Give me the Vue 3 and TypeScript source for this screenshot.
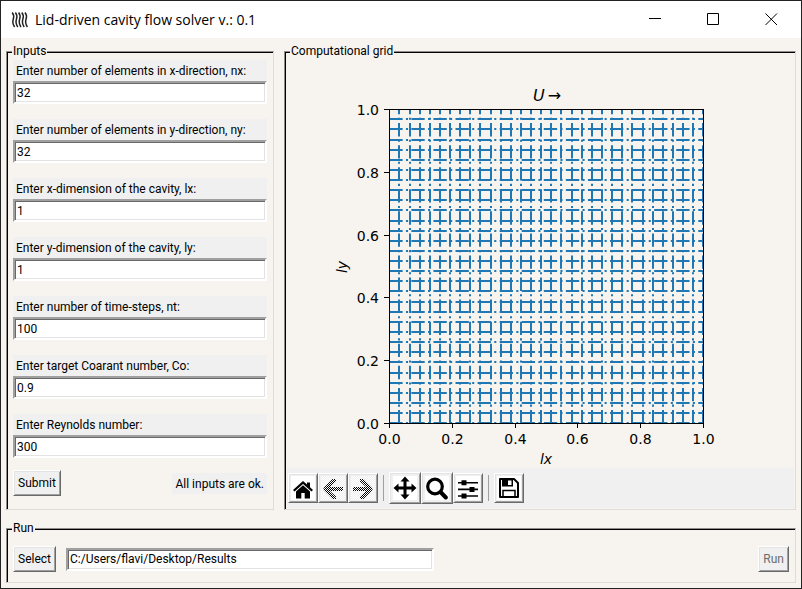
<script setup lang="ts">
import { reactive, ref } from 'vue'

interface Field {
  id: string
  label: string
  value: string
}

const fields = reactive<Field[]>([
  { id: 'nx', label: 'Enter number of elements in x-direction, nx:', value: '32' },
  { id: 'ny', label: 'Enter number of elements in y-direction, ny:', value: '32' },
  { id: 'lx', label: 'Enter x-dimension of the cavity, lx:', value: '1' },
  { id: 'ly', label: 'Enter y-dimension of the cavity, ly:', value: '1' },
  { id: 'nt', label: 'Enter number of time-steps, nt:', value: '100' },
  { id: 'co', label: 'Enter target Coarant number, Co:', value: '0.9' },
  { id: 're', label: 'Enter Reynolds number:', value: '300' },
])
const resultsPath = ref('C:/Users/flavi/Desktop/Results')

// Axes box inside the figure's viewBox
const left = 102
const right = 416
const top = 51
const bottom = 365
const size = right - left
const nodes = 32

const gridX = Array.from({ length: nodes }, (_, i) => Math.round(left + 0.3 + (size * i) / (nodes - 1)))
const gridY = Array.from({ length: nodes }, (_, i) => Math.round(bottom + 0.15 - (size * i) / (nodes - 1)))

const ticks = [0, 0.2, 0.4, 0.6, 0.8, 1].map((t) => ({
  text: t.toFixed(1),
  x: Math.round(left + size * t) + 0.5,
  y: Math.round(bottom - size * t) + 0.5,
}))
</script>

<template>
  <div class="window">
    <header class="titlebar">
      <svg class="logo" width="18" height="18" viewBox="0 0 18 18" aria-hidden="true">
        <path
          v-for="n in 5"
          :key="n"
          :transform="`translate(${(n - 1) * 3.2} 0)`"
          d="M1.2 1.5C3.2 4 3 6 2.3 8S1.6 13 3.6 16"
        />
      </svg>
      <h1>Lid-driven cavity flow solver v.: 0.1</h1>
      <div class="controls">
        <button type="button" aria-label="Minimize">
          <svg width="13" height="13" viewBox="0 0 13 13"><path d="M0 5.5H12" /></svg>
        </button>
        <button type="button" aria-label="Maximize">
          <svg width="13" height="13" viewBox="0 0 13 13"><path d="M.5 .5H11.5V11.5H.5Z" /></svg>
        </button>
        <button type="button" aria-label="Close">
          <svg width="13" height="13" viewBox="0 0 13 13"><path d="M.5 .5L12 12M12 .5L.5 12" /></svg>
        </button>
      </div>
    </header>

    <main class="body">
      <div class="columns">
        <fieldset class="frame inputs">
          <legend>Inputs</legend>
          <form class="form" @submit.prevent>
            <div v-for="f in fields" :key="f.id" class="field">
              <label :for="f.id">{{ f.label }}</label>
              <input :id="f.id" v-model="f.value" class="entry" type="text" />
            </div>
            <div class="submit-row">
              <button class="btn" type="submit">Submit</button>
              <output class="status">All inputs are ok.</output>
            </div>
          </form>
        </fieldset>

        <fieldset class="frame grid">
          <legend>Computational grid</legend>
          <div class="canvas">
            <svg class="figure" viewBox="0 0 507 410" role="img" aria-label="Computational grid">
              <clipPath id="axes"><rect :x="left" :y="top" :width="size + 1" :height="size + 1" /></clipPath>
              <g class="mesh" clip-path="url(#axes)">
                <path v-for="x in gridX" :key="'x' + x" :d="`M${x} ${bottom + 0.3}V${top}`" />
                <path v-for="y in gridY" :key="'y' + y" :d="`M${left + 0.3} ${y}H${right + 1}`" />
              </g>
              <rect class="spine" :x="left + 0.5" :y="top + 0.5" :width="size" :height="size" />
              <g v-for="t in ticks" :key="t.text">
                <path class="spine" :d="`M${t.x} ${bottom + 1}v4M${left} ${t.y}h-5`" />
                <text class="tick" :x="t.x" :y="bottom + 21" text-anchor="middle">{{ t.text }}</text>
                <text class="tick" :x="left - 10" :y="t.y + 5" text-anchor="end">{{ t.text }}</text>
              </g>
              <text class="axis" x="259" y="406" text-anchor="middle">lx</text>
              <text class="axis" transform="translate(60 209) rotate(-90)" text-anchor="middle">ly</text>
              <text class="heading" x="260" y="43" text-anchor="middle"><tspan class="ital">U</tspan><tspan dx="3">→</tspan></text>
            </svg>
            <div class="toolbar">
              <button class="tool" type="button" aria-label="Home">
                <svg width="24" height="24" viewBox="0 0 24 24">
                  <path d="M12 5L2 14L3.500 15.600L12 8L20.500 15.600L22 14L19 11.300V6.500H16V8.600Z" />
                  <path d="M12 9.200L5 15.500V22.500H10.300V17H13.700V22.500H19V15.500Z" />
                </svg>
              </button>
              <button class="tool" type="button" aria-label="Back" disabled>
                <svg width="24" height="24" viewBox="0 0 24 24">
                  <defs>
                    <pattern id="stipple" width="2" height="2" patternUnits="userSpaceOnUse">
                      <path d="M0 0H1V1H0ZM1 1H2V2H1Z" />
                    </pattern>
                    <pattern id="stipple-soft" width="2" height="2" patternUnits="userSpaceOnUse">
                      <path class="soft" d="M0 0H1V1H0ZM1 1H2V2H1Z" />
                    </pattern>
                  </defs>
                  <rect width="24" height="24" fill="url(#stipple-soft)" />
                  <path fill="url(#stipple)" d="M11.500 3H15V5.500L9 11H22V15H9L15 20.500V23H11.500L2.500 14V12Z" />
                </svg>
              </button>
              <button class="tool" type="button" aria-label="Forward" disabled>
                <svg width="24" height="24" viewBox="0 0 24 24">
                  <rect width="24" height="24" fill="url(#stipple-soft)" />
                  <path fill="url(#stipple)" d="M12.500 3H9V5.500L15 11H2V15H15L9 20.500V23H12.500L21.500 14V12Z" />
                </svg>
              </button>
              <span class="sep"></span>
              <button class="tool big" type="button" aria-label="Pan">
                <svg width="24" height="24" viewBox="0 0 24 24">
                  <path d="M12 .5L16.500 5.500H13.500V10.500H18.500V7.500L23.500 12L18.500 16.500V13.500H13.500V18.500H16.500L12 23.500L7.500 18.500H10.500V13.500H5.500V16.500L.5 12L5.500 7.500V10.500H10.500V5.500H7.500Z" />
                </svg>
              </button>
              <button class="tool big" type="button" aria-label="Zoom">
                <svg width="24" height="24" viewBox="0 0 24 24">
                  <circle class="line" cx="10" cy="10.500" r="7.300" stroke-width="3.200" />
                  <path class="line" d="M16 16.500L20.800 21.500" stroke-width="4" stroke-linecap="round" />
                </svg>
              </button>
              <button class="tool" type="button" aria-label="Configure subplots">
                <svg width="24" height="24" viewBox="0 0 24 24">
                  <path d="M2 6H22V7.600H2ZM2 12.600H22V14.200H2ZM2 19.200H22V20.800H2Z" />
                  <path d="M5.500 4.300H10.500V9.300H5.500ZM13.500 10.900H18.500V15.900H13.500ZM5.500 17.500H10.500V22.500H5.500Z" />
                </svg>
              </button>
              <span class="sep"></span>
              <button class="tool" type="button" aria-label="Save">
                <svg width="24" height="24" viewBox="0 0 24 24">
                  <path class="line" d="M3 3H17L21 7V21H3Z" stroke-width="2" stroke-linejoin="round" />
                  <path fill-rule="evenodd" d="M5 3H16V10.500H5ZM11 4.500V9H14.500V4.500Z" />
                  <path class="line" d="M6 21V14.500H18V21" stroke-width="1.500" />
                </svg>
              </button>
            </div>
          </div>
        </fieldset>
      </div>

      <fieldset class="frame run">
        <legend>Run</legend>
        <div class="run-row">
          <button class="btn" type="button">Select</button>
          <input v-model="resultsPath" class="entry path" type="text" aria-label="Results folder" />
          <button class="btn run-btn" type="button" disabled>Run</button>
        </div>
      </fieldset>
    </main>
  </div>
</template>

<style>
body {
  margin: 0;
  background: #f7f3ee;
}
</style>

<style scoped>
.window {
  box-sizing: border-box;
  min-height: 100vh;
  border: 1px solid #232323;
  background: #f7f3ee;
  color: #000;
  font: 12px/16px Roboto, 'Open Sans', sans-serif;
}
.titlebar {
  display: flex;
  align-items: center;
  height: 37px;
  padding: 0 1px 0 10px;
  background: #fff;
}
.logo {
  fill: none;
  stroke: #222;
  stroke-width: 1.5;
}
h1 {
  flex: 1;
  margin: 0 0 0 6px;
  font: 14px/20px 'Open Sans', 'Noto Sans', sans-serif;
}
.controls {
  display: flex;
}
.controls button {
  width: 58px;
  height: 37px;
  padding: 0;
  border: 0;
  background: none;
}
.controls svg {
  display: block;
  margin: auto;
  fill: none;
  stroke: #000;
}
.body {
  padding: 7px 5px 5px;
}
.columns {
  display: flex;
  gap: 10px;
}
.frame {
  box-sizing: border-box;
  min-width: 0;
  margin: 0;
  padding: 0;
  border: 1px solid;
  border-color: #8f8c89 #dfdbd6 #dfdbd6 #8f8c89;
  box-shadow: inset 1px 1px 0 #000;
}
legend {
  margin-left: 5px;
  padding: 0 1px;
  background: #f7f3ee;
  line-height: 13px;
}
.inputs {
  flex: 0 0 268px;
}
.form {
  display: flex;
  flex-direction: column;
  padding: 2px 6px 13px;
}
.field {
  display: flex;
  flex-direction: column;
  margin-bottom: 15px;
}
.field label {
  padding: 3px 3px 2px;
  background: #f0f0f0;
  white-space: nowrap;
}
.entry {
  box-sizing: border-box;
  height: 23px;
  padding: 0 2px;
  border: 2px solid;
  border-color: #a0a0a0 #fff #fff #a0a0a0;
  border-radius: 0;
  background: #fff;
  box-shadow: inset 1px 1px 0 #696969, inset -1px -1px 0 #e3e3e3;
  color: #000;
  font: inherit;
  outline: 0;
}
.submit-row {
  display: flex;
  align-items: center;
  justify-content: space-between;
  margin-top: -3px;
}
.btn,
.tool {
  box-sizing: border-box;
  border: 1px solid;
  border-color: #fff #696969 #696969 #fff;
  border-radius: 0;
  background: #f0f0f0;
  box-shadow: inset 1px 1px 0 #e3e3e3, inset -1px -1px 0 #a0a0a0;
  color: #000;
  font: inherit;
}
.btn {
  height: 26px;
  padding: 0 4px;
}
.btn:disabled {
  color: #6d6d6d;
}
.status {
  padding: 3px 3px 2px;
  background: #f0f0f0;
}
.grid {
  flex: 1;
}
.canvas {
  padding: 0 1px 1px 2px;
}
.figure {
  display: block;
  width: 100%;
}
.mesh path {
  fill: none;
  stroke: #1f77b4;
  stroke-width: 2;
  stroke-dasharray: 13.33 3.33 2.08 3.33;
}
.spine {
  fill: none;
  stroke: #000;
}
.tick,
.axis {
  font: 14px 'DejaVu Sans', sans-serif;
}
.axis {
  font-style: italic;
}
.heading {
  font: 16px 'DejaVu Sans', sans-serif;
}
.ital {
  font-style: italic;
}
.toolbar {
  display: flex;
  align-items: center;
  height: 40px;
  padding-left: 1px;
  background: #f0f0f0;
}
.tool {
  width: 30px;
  height: 30px;
  padding: 0;
}
.tool.big {
  width: 32px;
  height: 32px;
}
.tool svg {
  display: block;
  margin: auto;
  background: #fff;
}
.line {
  fill: none;
  stroke: #000;
}
.soft {
  fill: #eee;
}
.sep {
  width: 1px;
  height: 26px;
  margin: 0 5px;
  background: #a0a0a0;
}
.run {
  margin-top: 12px;
}
.run-row {
  display: flex;
  align-items: center;
  padding: 11px 6px 10px;
}
.path {
  width: 368px;
  margin-left: 10px;
}
.run-btn {
  margin-left: auto;
}
</style>
